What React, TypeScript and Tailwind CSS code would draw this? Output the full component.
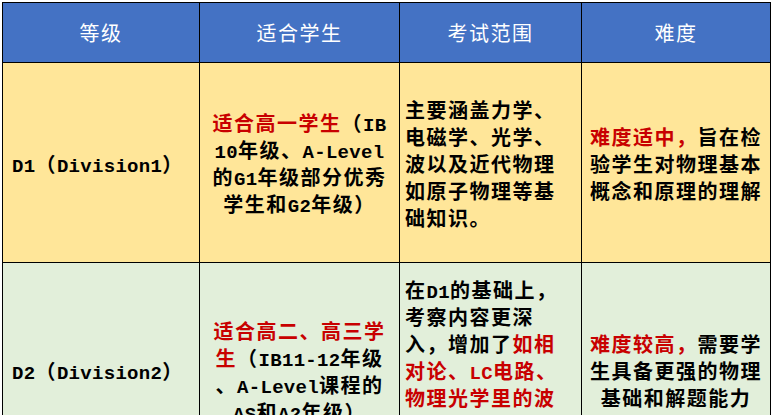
import type { ReactNode } from "react"

// latin run: half-width monospace with its own spacing
function L({ children }: { children: ReactNode }) {
  return <span className="text-[19px] tracking-[0.3px]">{children}</span>
}

function R({ children }: { children: ReactNode }) {
  return <span className="text-[#c80000]">{children}</span>
}

function Cell({
  bg,
  align = "center",
  lines,
}: {
  bg: string
  align?: "center" | "left" | "pad"
  lines: ReactNode[]
}) {
  const alignCls =
    align === "left" ? "items-start pl-[5px]" : align === "pad" ? "items-start pl-[9px]" : "items-center"
  return (
    <div className={`${bg} border-r border-b border-black flex flex-col justify-center pt-[7px] ${alignCls}`}>
      {lines.map((line, i) => (
        <div key={i} className="whitespace-nowrap leading-[27px] h-[27px]">
          {line}
        </div>
      ))}
    </div>
  )
}

const headers = ["等级", "适合学生", "考试范围", "难度"]

export default function App() {
  return (
    <div className="w-[773px] h-[415px] overflow-hidden bg-white pt-[2px] pl-[2px]">
      <div
        className="grid grid-cols-[197px_200px_182px_189px] w-[769px] border-l border-t border-black text-[20px] font-bold tracking-[1.5px] text-black"
        style={{ fontFamily: '"Liberation Mono", "Noto Sans CJK SC", monospace' }}
      >
        {headers.map((h) => (
          <div
            key={h}
            className="h-[60px] bg-[#4472c4] border-r border-b border-black flex items-center justify-center text-white font-normal pt-[6px]"
          >
            {h}
          </div>
        ))}

        {/* D1 */}
        <Cell
          bg="bg-[#ffe699] h-[200px]"
          align="pad"
          lines={[
            <>
              <L>D1</L>（<L>Division1</L>）
            </>,
          ]}
        />
        <Cell
          bg="bg-[#ffe699]"
          lines={[
            <>
              <R>适合高一学生</R>（<L>IB</L>
            </>,
            <>
              <L>10</L>年级、<L>A-Level</L>
            </>,
            <>
              的<L>G1</L>年级部分优秀
            </>,
            <>
              学生和<L>G2</L>年级）
            </>,
          ]}
        />
        <Cell
          bg="bg-[#ffe699]"
          align="left"
          lines={["主要涵盖力学、", "电磁学、光学、", "波以及近代物理", "如原子物理等基", "础知识。"]}
        />
        <Cell
          bg="bg-[#ffe699]"
          lines={[
            <>
              <R>难度适中，</R>旨在检
            </>,
            "验学生对物理基本",
            "概念和原理的理解",
          ]}
        />

        {/* D2 */}
        <Cell
          bg="bg-[#e2efda] h-[215px]"
          align="pad"
          lines={[
            <>
              <L>D2</L>（<L>Division2</L>）
            </>,
          ]}
        />
        <Cell
          bg="bg-[#e2efda]"
          lines={[
            <R>适合高二、高三学</R>,
            <>
              <R>生</R>（<L>IB11-12</L>年级
            </>,
            <>
              、<L>A-Level</L>课程的
            </>,
            <>
              <L>AS</L>和<L>A2</L>年级）
            </>,
          ]}
        />
        <Cell
          bg="bg-[#e2efda]"
          align="left"
          lines={[
            <>
              在<L>D1</L>的基础上，
            </>,
            "考察内容更深",
            <>
              入，增加了<R>如相</R>
            </>,
            <R>
              对论、<L>LC</L>电路、
            </R>,
            <R>物理光学里的波</R>,
            <R>动光学等高级物</R>,
            <R>理内容。</R>,
          ]}
        />
        <Cell
          bg="bg-[#e2efda]"
          lines={[
            <>
              <R>难度较高，</R>需要学
            </>,
            "生具备更强的物理",
            "基础和解题能力",
          ]}
        />
      </div>
    </div>
  )
}
